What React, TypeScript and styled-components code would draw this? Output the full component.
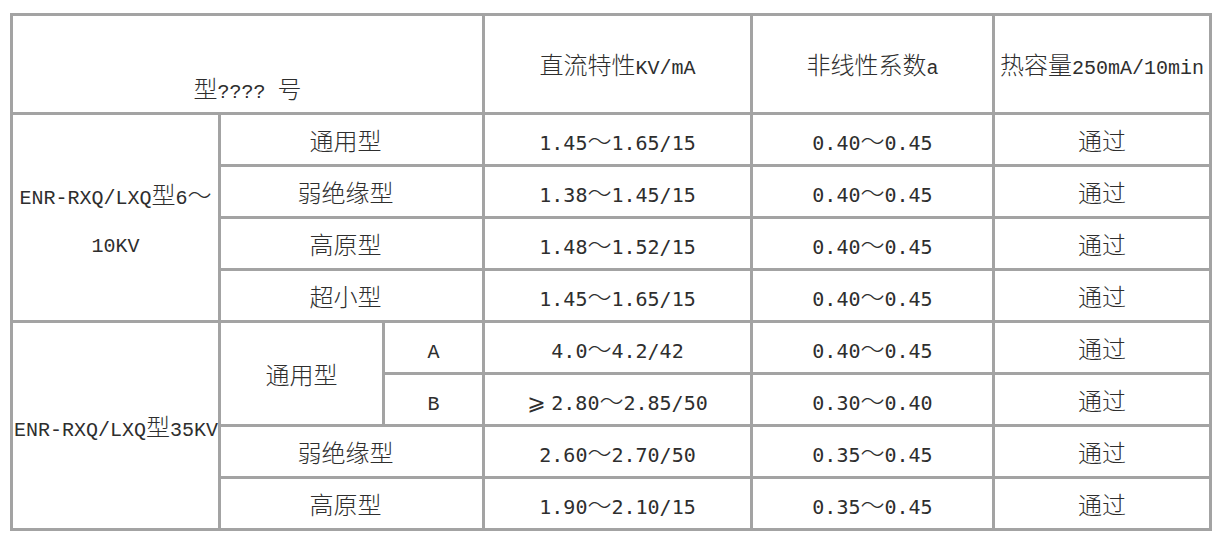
import React from "react";
import styled, { createGlobalStyle } from "styled-components";

type Face = "serif" | "sans";

const GlobalStyle = createGlobalStyle`
  body {
    margin: 0;
    background: #ffffff;
  }
`;

const Table = styled.table`
  margin: 13px 0 0 10px;
  width: 1202px;
  table-layout: fixed;
  border-collapse: collapse;
  font-family: "Noto Sans CJK SC", "Noto Sans", sans-serif;
  font-size: 24px;
  font-weight: 300;
  line-height: 48px;
  color: #2e2e2e;
`;

const Col = styled.col<{ $w: number }>`
  width: ${(p) => p.$w}px;
`;

const HeadRow = styled.tr`
  height: 99px;
`;

const Row = styled.tr`
  height: 52px;
`;

const Cell = styled.td<{ $shift?: boolean }>`
  border: 3px solid #a3a3a3;
  padding: ${(p) => (p.$shift ? "0 13px 0 1px" : "0 1px")};
  text-align: center;
  vertical-align: middle;
  white-space: nowrap;
`;

const Latin = styled.span<{ $face: Face }>`
  font-family: ${(p) =>
    p.$face === "serif"
      ? '"Liberation Mono", "DejaVu Sans Mono", monospace'
      : '"DejaVu Sans Mono", "Liberation Mono", monospace'};
  font-size: 20px;
  font-weight: 400;
  line-height: 1;
`;

const Ge = styled.span`
  display: inline-block;
  width: 20px;
  margin-right: 4px;
  text-align: left;
  font-family: "DejaVu Sans", sans-serif;
  font-size: 22px;
  font-weight: 400;
  line-height: 1;
`;

// split a label into latin runs (half width) and CJK runs (full width)
function mix(text: string, face: Face = "serif") {
  return text
    .split(/([\x20-\x7e]+|⩾)/)
    .filter(Boolean)
    .map((part, i) => {
      if (part === "⩾") return <Ge key={i}>⩾</Ge>;
      if (/^[\x20-\x7e]+$/.test(part))
        return (
          <Latin key={i} $face={face}>
            {part}
          </Latin>
        );
      return <React.Fragment key={i}>{part}</React.Fragment>;
    });
}

const smallGroup = [
  { name: "通用型", dc: "1.45～1.65/15", coef: "0.40～0.45" },
  { name: "弱绝缘型", dc: "1.38～1.45/15", coef: "0.40～0.45" },
  { name: "高原型", dc: "1.48～1.52/15", coef: "0.40～0.45" },
  { name: "超小型", dc: "1.45～1.65/15", coef: "0.40～0.45" },
];

const bigGroupTail = [
  { name: "弱绝缘型", dc: "2.60～2.70/50", coef: "0.35～0.45" },
  { name: "高原型", dc: "1.90～2.10/15", coef: "0.35～0.45" },
];

function App(): JSX.Element {
  return (
    <>
      <GlobalStyle />
      <Table>
        <colgroup>
          <Col $w={208} />
          <Col $w={164} />
          <Col $w={100} />
          <Col $w={268} />
          <Col $w={242} />
          <Col $w={217} />
        </colgroup>
        <tbody>
          <HeadRow>
            <Cell colSpan={3}>
              <br />
              {mix("型???? 号")}
            </Cell>
            <Cell>{mix("直流特性KV/mA")}</Cell>
            <Cell>{mix("非线性系数a")}</Cell>
            <Cell>{mix("热容量250mA/10min")}</Cell>
          </HeadRow>

          {smallGroup.map((r, i) => (
            <Row key={r.name}>
              {i === 0 && (
                <Cell rowSpan={4}>
                  {mix("ENR-RXQ/LXQ型6～")}
                  <br />
                  {mix("10KV")}
                </Cell>
              )}
              <Cell colSpan={2} $shift>
                {r.name}
              </Cell>
              <Cell>{mix(r.dc, "sans")}</Cell>
              <Cell>{mix(r.coef, "sans")}</Cell>
              <Cell>通过</Cell>
            </Row>
          ))}

          <Row>
            <Cell rowSpan={4}>{mix("ENR-RXQ/LXQ型35KV")}</Cell>
            <Cell rowSpan={2}>通用型</Cell>
            <Cell>{mix("A")}</Cell>
            <Cell>{mix("4.0～4.2/42", "sans")}</Cell>
            <Cell>{mix("0.40～0.45", "sans")}</Cell>
            <Cell>通过</Cell>
          </Row>
          <Row>
            <Cell>{mix("B")}</Cell>
            <Cell>{mix("⩾2.80～2.85/50", "sans")}</Cell>
            <Cell>{mix("0.30～0.40", "sans")}</Cell>
            <Cell>通过</Cell>
          </Row>
          {bigGroupTail.map((r) => (
            <Row key={r.name}>
              <Cell colSpan={2} $shift>
                {r.name}
              </Cell>
              <Cell>{mix(r.dc, "sans")}</Cell>
              <Cell>{mix(r.coef, "sans")}</Cell>
              <Cell>通过</Cell>
            </Row>
          ))}
        </tbody>
      </Table>
    </>
  );
}

export default App;
